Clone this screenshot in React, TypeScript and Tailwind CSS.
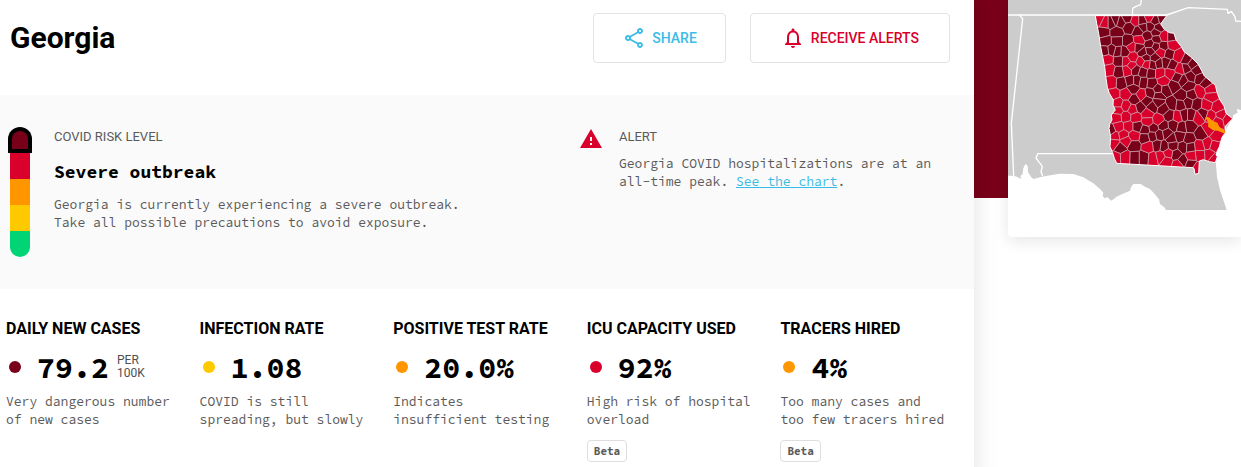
import React from 'react';
import { MdNotificationsNone, MdOutlineShare, MdWarning } from 'react-icons/md';

type Point = [number, number];

const RISK = {
  severe: '#790019',
  high: '#d9002c',
  medium: '#ff9600',
  low: '#ffc900',
  onTrack: '#00d474',
};

interface Metric {
  name: string;
  value: string;
  unit?: [string, string];
  color: string;
  description: string;
  beta?: boolean;
}

const metrics: Metric[] = [
  {
    name: 'Daily new cases',
    value: '79.2',
    unit: ['PER', '100K'],
    color: RISK.severe,
    description: 'Very dangerous number of new cases',
  },
  {
    name: 'Infection rate',
    value: '1.08',
    color: RISK.low,
    description: 'COVID is still spreading, but slowly',
  },
  {
    name: 'Positive test rate',
    value: '20.0%',
    color: RISK.medium,
    description: 'Indicates insufficient testing',
  },
  {
    name: 'ICU capacity used',
    value: '92%',
    color: RISK.high,
    description: 'High risk of hospital overload',
    beta: true,
  },
  {
    name: 'Tracers hired',
    value: '4%',
    color: RISK.medium,
    description: 'Too many cases and too few tracers hired',
    beta: true,
  },
];

// County centres, grouped by risk level
const severeCounties: Point[] = [
  [424, 68], [437, 62], [451, 66], [472, 54], [478, 82], [516, 62], [520, 82], [541, 80],
  [555, 62], [577, 56], [565, 84], [400, 97], [440, 97], [505, 94], [532, 108], [558, 97],
  [604, 110], [407, 124], [441, 124], [474, 124], [540, 132], [560, 118], [557, 140], [580, 138],
  [405, 152], [443, 155], [425, 150], [464, 156], [505, 142], [518, 158], [540, 154], [598, 162],
  [527, 174], [555, 174], [650, 180], [447, 183], [548, 194], [566, 190], [588, 188], [606, 196],
  [648, 204], [666, 192], [681, 212], [447, 215], [496, 210], [520, 217], [543, 220], [622, 232],
  [640, 242], [662, 230], [690, 234], [612, 258], [454, 250], [482, 243], [500, 243], [520, 247],
  [545, 250], [490, 266], [565, 268], [655, 258], [708, 250], [493, 299], [540, 280], [567, 287],
  [585, 270], [606, 312], [635, 287], [665, 285], [510, 322], [531, 302], [547, 320], [565, 307],
  [580, 327], [632, 315], [655, 307], [680, 312], [598, 347], [643, 345], [662, 345], [700, 341],
  [502, 380], [423, 392], [526, 389], [550, 385], [580, 378], [610, 376], [635, 382], [660, 378],
  [694, 402], [525, 414], [548, 408], [568, 404], [590, 400], [605, 417], [630, 410], [656, 418],
  [450, 443], [492, 436], [562, 437], [582, 440], [608, 438], [640, 441], [660, 442], [494, 473],
  [522, 473], [618, 464], [638, 482], [662, 492],
];

const highCounties: Point[] = [
  [388, 60], [404, 68], [496, 62], [538, 52], [582, 110], [508, 120], [608, 135], [485, 141],
  [572, 156], [625, 168], [412, 180], [468, 184], [488, 172], [514, 184], [530, 192], [630, 208],
  [418, 208], [472, 211], [484, 198], [570, 220], [600, 220], [580, 243], [424, 248], [432, 283],
  [468, 283], [515, 285], [690, 275], [720, 268], [722, 290], [443, 310], [468, 318], [443, 332],
  [488, 328], [710, 315], [742, 322], [753, 346], [440, 352], [468, 350], [497, 352], [532, 342],
  [533, 365], [565, 360], [623, 350], [685, 352], [722, 348], [772, 358], [745, 364], [447, 382],
  [475, 380], [716, 388], [740, 408], [435, 408], [460, 404], [492, 408], [690, 438], [712, 432],
  [433, 430], [468, 423], [535, 440], [733, 438], [718, 464], [690, 465], [438, 473], [465, 472],
  [549, 475], [572, 470], [595, 460], [590, 484], [624, 494], [664, 468], [680, 505], [732, 476],
];

const counties = [
  ...severeCounties.map((center) => ({ center, color: RISK.severe })),
  ...highCounties.map((center) => ({ center, color: RISK.high })),
];

const georgiaPath =
  'M376 47L590 47L572 72L583 88L598 98L612 100L618 120L634 140L642 155L664 172L684 192L694 210L703 228L722 244L736 256L742 280L750 300L762 318L768 340L788 356L778 366L767 378L766 398L757 410L752 425L748 440L742 452L738 465L742 470L736 488L718 485L700 479L688 483L687 500L686 520L675 523L672 505L669 503L440 490L433 475L428 458L420 440L422 410L417 385L420 370L426 360L424 345L436 330L429 315L430 300L418 280L412 262L408 235L404 200L398 170L392 140L386 100L380 70Z';

const landPath =
  'M114 0H813V330L800 327L803 338L790 345L788 356L780 366L765 395L752 420L742 445L737 470L738 495L741 530L750 570L760 600L770 630H588L583 622L570 612L567 598L552 580L540 567L525 560L512 552L490 552L483 562L480 572L455 583L440 590L424 602L412 592L404 595L398 588L400 578L390 567L370 550L340 532L310 522L270 521L240 526L216 530L190 537L184 532L174 516L173 497L166 492L160 505L157 524L151 527L154 537L142 531L131 527L114 527Z';

// Keeps the part of a polygon that lies nearer to a than to b
function clipToNearest(polygon: Point[], a: Point, b: Point): Point[] {
  const nx = b[0] - a[0];
  const ny = b[1] - a[1];
  const limit = (nx * (a[0] + b[0]) + ny * (a[1] + b[1])) / 2;
  const side = (p: Point) => p[0] * nx + p[1] * ny - limit;

  const result: Point[] = [];
  polygon.forEach((p, i) => {
    const q = polygon[(i + 1) % polygon.length];
    const sp = side(p);
    const sq = side(q);
    if (sp <= 0) result.push(p);
    if (sp * sq < 0) {
      const t = sp / (sp - sq);
      result.push([p[0] + (q[0] - p[0]) * t, p[1] + (q[1] - p[1]) * t]);
    }
  });
  return result;
}

const countyShapes = counties.map(({ center, color }) => {
  let cell: Point[] = [
    [center[0] - 60, center[1] - 60],
    [center[0] + 60, center[1] - 60],
    [center[0] + 60, center[1] + 60],
    [center[0] - 60, center[1] + 60],
  ];
  counties.forEach((other) => {
    if (other.center !== center) cell = clipToNearest(cell, center, other.center);
  });
  return { color, points: cell.map(([x, y]) => `${x.toFixed(1)},${y.toFixed(1)}`).join(' ') };
});

function GeorgiaMap() {
  return (
    <svg viewBox="114 0 699 630" className="block h-auto w-full" role="img" aria-label="Map of Georgia counties by risk level">
      <defs>
        <clipPath id="georgia">
          <path d={georgiaPath} />
        </clipPath>
      </defs>
      <path d={landPath} fill="#cccccc" />
      {/* State borders */}
      <g fill="none" stroke="#fff" strokeWidth="4" strokeLinejoin="round">
        <path d="M114 45H590L655 23L772 28L774 40L784 34L795 50L797 63L813 64" />
        <path d="M148 45L158 56L124 370L131 527" />
        <path d="M514 0L512 14L498 19L488 25L487 45" />
        <path d="M428 461H203L198 474L210 490L217 500L213 515L218 528" />
      </g>
      <g clipPath="url(#georgia)" stroke="#cfa9b1" strokeWidth="2">
        {countyShapes.map((county) => (
          <polygon key={county.points} points={county.points} fill={county.color} />
        ))}
      </g>
      <path d={georgiaPath} fill="none" stroke="#fff" strokeWidth="3" strokeLinejoin="round" />
      <path
        d="M706 353L711 350L718 353L728 362L742 368L748 380L766 394L764 401L745 393L728 390L714 380L715 368Z"
        fill={RISK.medium}
      />
    </svg>
  );
}

function Thermometer() {
  return (
    <svg width="24" height="130" viewBox="0 0 24 130" className="shrink-0" aria-hidden="true">
      <path d="M2 26h20v26H2z" fill={RISK.high} />
      <path d="M2 52h20v26H2z" fill={RISK.medium} />
      <path d="M2 78h20v26H2z" fill={RISK.low} />
      <path d="M2 104h20v16a10 10 0 0 1-20 0z" fill={RISK.onTrack} />
      <path d="M0 26V12a12 12 0 0 1 24 0v14z" fill="#000" />
      <path d="M4 22V12a8 8 0 0 1 16 0v10z" fill={RISK.severe} />
    </svg>
  );
}

function MetricSummary({ metric }: { metric: Metric }) {
  return (
    <article className="pr-6">
      <h2 className="whitespace-nowrap font-['Roboto',sans-serif] text-base font-bold uppercase leading-6 text-black">
        {metric.name}
      </h2>
      <div className="mt-2 flex h-9 items-center">
        <span className="ml-[3px] size-3 rounded-full" style={{ backgroundColor: metric.color }} />
        <span className="ml-4 text-[30px] font-bold leading-9 text-black">{metric.value}</span>
        {metric.unit && (
          <span className="ml-2 font-['Roboto',sans-serif] text-xs leading-[13px] text-[#4f4f4f]">
            {metric.unit[0]}
            <br />
            {metric.unit[1]}
          </span>
        )}
      </div>
      <p className="mt-2 text-[13px] leading-[18px]">{metric.description}</p>
      {metric.beta && (
        <span className="mt-[11px] inline-block rounded border border-[#dedede] px-1.5 text-[11px] font-bold leading-5">
          Beta
        </span>
      )}
    </article>
  );
}

export default function App() {
  return (
    <div className="grid grid-cols-[minmax(0,974fr)_minmax(0,267fr)] overflow-hidden bg-white font-['Source_Code_Pro','Liberation_Mono',monospace] text-[#5a5a5a]">
      <main className="relative z-10 bg-white shadow-[0_0_24px_rgba(0,0,0,0.12)]">
        <header className="flex items-start justify-between pb-8 pl-2.5 pr-6 pt-[13px]">
          <h1 className="font-['Roboto',sans-serif] text-[30px] font-bold leading-[50px] text-black">Georgia</h1>
          <div className="flex gap-6 font-['Roboto',sans-serif] text-sm font-medium">
            <button
              type="button"
              className="flex h-[50px] items-center gap-1.5 rounded border border-[#e3e3e3] px-7 text-[#3bbce6]"
            >
              <MdOutlineShare className="size-6" />
              SHARE
            </button>
            <button
              type="button"
              className="flex h-[50px] items-center gap-1.5 rounded border border-[#e3e3e3] px-[30px] text-[#d9002c]"
            >
              <MdNotificationsNone className="size-6" />
              RECEIVE ALERTS
            </button>
          </div>
        </header>

        <section className="flex bg-[#fafafa] py-8 pl-2">
          <div className="flex flex-1 gap-[22px]">
            <Thermometer />
            <div>
              <h2 className="font-['Roboto',sans-serif] text-[13px] leading-5">COVID RISK LEVEL</h2>
              <p className="mt-[11px] text-lg font-bold leading-7 text-black">Severe outbreak</p>
              <p className="mt-2.5 text-[13px] leading-[18px]">
                Georgia is currently experiencing a severe outbreak.
                <br />
                Take all possible precautions to avoid exposure.
              </p>
            </div>
          </div>
          <div className="flex w-[395px] gap-4">
            <MdWarning className="size-6 shrink-0 text-[#d9002c]" />
            <div>
              <h2 className="font-['Roboto',sans-serif] text-[13px] leading-5">ALERT</h2>
              <p className="mt-2 pr-6 text-[13px] leading-[18px]">
                Georgia COVID hospitalizations are at an all-time peak.{' '}
                <a href="#chart" className="text-[#3bbce6] underline">
                  See the chart
                </a>
                .
              </p>
            </div>
          </div>
        </section>

        <section className="grid grid-cols-5 pb-6 pl-1.5 pt-7">
          {metrics.map((metric) => (
            <MetricSummary key={metric.name} metric={metric} />
          ))}
        </section>
      </main>

      {/* County map over the risk-coloured banner */}
      <aside className="relative">
        <div className="absolute inset-x-0 top-0 h-[198px] bg-[#790019]" />
        <div className="relative z-20 ml-[34px] rounded-bl bg-white pb-[27px] shadow-[0_4px_16px_rgba(0,0,0,0.1)]">
          <GeorgiaMap />
        </div>
      </aside>
    </div>
  );
}
